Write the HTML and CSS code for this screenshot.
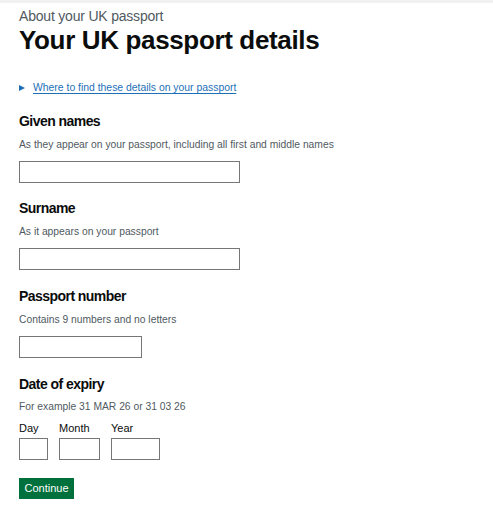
FILE: index.html
```html
<!DOCTYPE html>
<html lang="en">
<head>
<meta charset="utf-8">
<title>Your UK passport details</title>
<link rel="stylesheet" href="styles.css">
</head>
<body>
<div class="topbar"></div>
<main class="page">
  <span class="caption">About your UK passport</span>
  <h1 class="heading">Your UK passport details</h1>

  <div class="details">
    <span class="details-arrow"></span>
    <a class="details-link" href="#">Where to find these details on your passport</a>
  </div>

  <div class="group">
    <label class="label">Given names</label>
    <div class="hint">As they appear on your passport, including all first and middle names</div>
    <input class="input input-wide" type="text">
  </div>

  <div class="group">
    <label class="label">Surname</label>
    <div class="hint">As it appears on your passport</div>
    <input class="input input-wide" type="text">
  </div>

  <div class="group group-wide-gap">
    <label class="label">Passport number</label>
    <div class="hint">Contains 9 numbers and no letters</div>
    <input class="input input-mid" type="text">
  </div>

  <div class="group group-wide-gap">
    <label class="label">Date of expiry</label>
    <div class="hint hint-date">For example 31 MAR 26 or 31 03 26</div>
    <div class="date-row">
      <div class="date-item">
        <span class="date-label">Day</span>
        <input class="input input-day" type="text">
      </div>
      <div class="date-item">
        <span class="date-label">Month</span>
        <input class="input input-month" type="text">
      </div>
      <div class="date-item">
        <span class="date-label">Year</span>
        <input class="input input-year" type="text">
      </div>
    </div>
  </div>

  <button class="button" type="button">Continue</button>
</main>
</body>
</html>
```

FILE: styles.css
```css
* { box-sizing: border-box; }

html, body {
  margin: 0;
  padding: 0;
  background: #ffffff;
}

body {
  font-family: "Liberation Sans", Arial, sans-serif;
  color: #0b0c0c;
}

.topbar {
  height: 3px;
  background: #f1f1f1;
}

.page {
  padding: 5px 0 0 19px;
  display: flex;
  flex-direction: column;
  align-items: flex-start;
}

.caption {
  display: block;
  font-size: 14px;
  line-height: 16px;
  color: #505a5f;
  letter-spacing: -0.2px;
}

.heading {
  margin: 0;
  font-size: 26px;
  line-height: 32px;
  font-weight: 700;
  letter-spacing: -0.35px;
}

.details {
  margin-top: 25px;
  display: flex;
  align-items: center;
  height: 14px;
}

.details-arrow {
  width: 0;
  height: 0;
  border-top: 3.5px solid transparent;
  border-bottom: 3.5px solid transparent;
  border-left: 6px solid #1d70b8;
  margin-right: 8px;
}

.details-link {
  font-size: 10.4px;
  line-height: 14px;
  color: #1d70b8;
  text-decoration: underline;
  text-underline-offset: 2px;
}

.group {
  margin-top: 17px;
  display: flex;
  flex-direction: column;
  align-items: flex-start;
}

.group + .group {
  margin-top: 16px;
}

.group + .group-wide-gap {
  margin-top: 17px;
}

.label {
  font-size: 14px;
  line-height: 18px;
  font-weight: 700;
  letter-spacing: -0.55px;
}

.hint {
  margin-top: 8px;
  margin-bottom: 9px;
  font-size: 10.3px;
  line-height: 14px;
  color: #505a5f;
}

.hint-date {
  margin-top: 7px;
  margin-bottom: 7px;
}

.input {
  height: 22px;
  border: 1.5px solid #767676;
  background: #ffffff;
  padding: 0 4px;
  margin: 0;
  font: inherit;
}

.input-wide { width: 221px; }
.input-mid { width: 123px; }
.input-day { width: 29px; }
.input-month { width: 41px; }
.input-year { width: 49px; }

.date-row {
  display: flex;
  gap: 11px;
}

.date-item {
  display: flex;
  flex-direction: column;
  align-items: flex-start;
}

.date-label {
  font-size: 11px;
  line-height: 14px;
  margin-bottom: 3px;
}

.button {
  margin-top: 18px;
  width: 55px;
  height: 21px;
  padding: 0;
  border: 0;
  background: #00703c;
  color: #ffffff;
  font-family: "Liberation Sans", Arial, sans-serif;
  font-size: 11px;
  line-height: 21px;
  box-shadow: 0 2px 0 #002d18;
  cursor: pointer;
}
```
